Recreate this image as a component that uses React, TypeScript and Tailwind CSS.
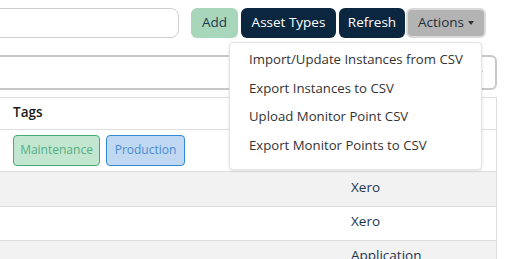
export default function App() {
  const font = { fontFamily: '"Open Sans", "Noto Sans", sans-serif' };
  return (
    <div className="relative w-[508px] h-[259px] overflow-hidden bg-white text-[#222]" style={font}>
      {/* toolbar */}
      <div className="flex items-center pt-2 h-[38px]">
        <div className="ml-[-20px] w-[199px] h-[30px] rounded-lg border border-[#cfcfcf] bg-white" />
        <button className="ml-3 h-[30px] w-[47px] rounded-md bg-[#a8d6bb] text-[13.5px] text-[#1e3a4d] pb-px">Add</button>
        <button className="ml-[3px] h-[30px] w-[95px] rounded-md bg-[#0b2740] text-[13.5px] text-white pb-px">Asset Types</button>
        <button className="ml-[3px] h-[30px] w-[66px] rounded-md bg-[#0b2740] text-[13.5px] text-white pb-px">Refresh</button>
        <button className="ml-px h-[30px] w-[80px] rounded-md border-2 border-[#d9d9d9] bg-[#b3b3b3] text-[13.5px] text-[#1e2e3a] flex items-center justify-center gap-1 pb-px">
          Actions
          <span className="inline-block w-0 h-0 border-l-[3px] border-r-[3px] border-t-[4px] border-l-transparent border-r-transparent border-t-[#333]" />
        </button>
      </div>

      {/* select */}
      <div className="mt-[17px] w-[497px] h-[35px] border-y-2 border-r-2 border-[#c8c8c8] rounded-r-md bg-white flex items-center justify-end pr-[12px]">
        <svg width="10" height="10" viewBox="0 0 10 10" className="text-[#333]">
          <path d="M1 3l4 4 4-4" fill="none" stroke="currentColor" strokeWidth="1.5" />
        </svg>
      </div>

      {/* table */}
      <div className="mt-[7px] w-[497px] border-r border-[#dedede] text-[13.5px]">
        <div className="h-[33px] border-y border-[#dedede] flex items-center pl-[13px] pb-[3px] font-semibold text-[#1a1a1a]">Tags</div>
        <div className="h-[42px] border-b border-[#dedede] flex items-center gap-[6px] pl-[13px]">
          <span className="h-[31px] w-[87px] rounded border border-[#45ad73] bg-[#c3e6d1] text-[#52b080] text-[12px] flex items-center justify-center pb-px">Maintenance</span>
          <span className="h-[31px] w-[79px] rounded border border-[#3488d8] bg-[#c0d8f1] text-[#4a8cd4] text-[12px] flex items-center justify-center pb-px">Production</span>
        </div>
        <div className="h-[35px] border-b border-[#dedede] bg-[#f2f2f2] flex items-center pl-[351px] pb-[4px] text-[#1c3550]">Xero</div>
        <div className="h-[34px] border-b border-[#dedede] bg-white flex items-center pl-[351px] pb-[4px] text-[#1c3550]">Xero</div>
        <div className="h-[34px] border-b border-[#dedede] bg-[#f2f2f2] flex items-center pl-[351px] pb-[4px] text-[#1c3550]">Application</div>
      </div>

      {/* dropdown menu */}
      <div className="absolute left-[229px] top-[42px] w-[253px] h-[128px] rounded border border-[#e3e3e3] bg-white shadow-[0_1px_3px_rgba(0,0,0,0.12)] pt-[3px] text-[13.2px] text-[#333]">
        {["Import/Update Instances from CSV", "Export Instances to CSV", "Upload Monitor Point CSV", "Export Monitor Points to CSV"].map((t) => (
          <div key={t} className="h-[28.5px] flex items-center pl-[19px]">{t}</div>
        ))}
      </div>
    </div>
  );
}
